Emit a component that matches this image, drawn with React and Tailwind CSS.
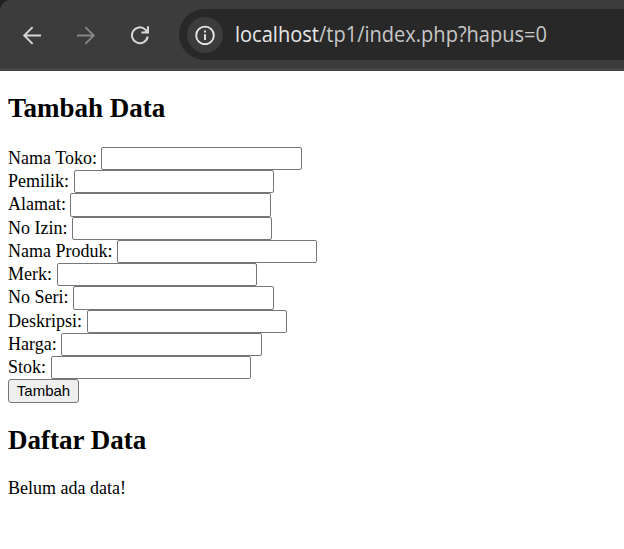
const fields = [
  { label: "Nama Toko:", labelClass: "w-[93px]", inputClass: "w-[201px] h-[23px]" },
  { label: "Pemilik:", labelClass: "w-[66px]", inputClass: "w-[200px] h-[23px]" },
  { label: "Alamat:", labelClass: "w-[62px]", inputClass: "w-[201px] h-[24px]" },
  { label: "No Izin:", labelClass: "w-[64px]", inputClass: "w-[200px] h-[23px]" },
  { label: "Nama Produk:", labelClass: "w-[109px]", inputClass: "w-[200px] h-[23px]" },
  { label: "Merk:", labelClass: "w-[49px]", inputClass: "w-[200px] h-[23px]" },
  { label: "No Seri:", labelClass: "w-[65px]", inputClass: "w-[201px] h-[24px]" },
  { label: "Deskripsi:", labelClass: "w-[79px]", inputClass: "w-[200px] h-[23px]" },
  { label: "Harga:", labelClass: "w-[53px]", inputClass: "w-[201px] h-[23px]" },
  { label: "Stok:", labelClass: "w-[43px]", inputClass: "w-[200px] h-[23px]" },
];

function Toolbar() {
  return (
    <header className="h-[71px] border-b border-[#3c3c3c] bg-[#202020]">
      <div className="flex h-[70px] items-start rounded-tl-[10px] border-b border-b-[#505050] bg-[#3c3c3c] pt-[9px]">
        <div className="flex h-[51px] w-[179px] shrink-0 items-center pl-[22px]">
          <svg className="h-5 w-5" viewBox="0 0 20 20" fill="none" stroke="#d6d6d6" strokeWidth="1.9">
            <path d="M19 10.5H2.3M10.6 2.1L2.2 10.5L10.6 18.9" />
          </svg>
          <svg className="ml-[34px] h-5 w-5" viewBox="0 0 20 20" fill="none" stroke="#858585" strokeWidth="1.9">
            <path d="M1 10.5H17.7M9.4 2.1L17.8 10.5L9.4 18.9" />
          </svg>
          <svg className="ml-[34px] h-5 w-5" viewBox="0 0 20 20" fill="none" stroke="#d6d6d6" strokeWidth="2">
            <path d="M17.7 11.5A7.9 7.9 0 1 1 15.4 4.6L17.6 6.8M18 1.2V7.4H11.4" />
            <path d="M18 3.5V7.4H13.8Z" fill="#d6d6d6" stroke="none" />
          </svg>
        </div>
        <div className="flex h-[51px] min-w-0 flex-1 items-center rounded-l-full bg-[#282828] pl-2">
          <div className="flex h-9 w-9 shrink-0 items-center justify-center rounded-full bg-[#3c3c3c]">
            <svg className="h-5 w-5" viewBox="0 0 20 20" fill="none" stroke="#e6e6e6" strokeWidth="1.9">
              <circle cx="10" cy="10.4" r="8.8" />
              <path d="M10 9.2V15M10 5.4V7.4" />
            </svg>
          </div>
          <svg className="ml-3 h-[51px] w-[320px] overflow-visible font-['Open_Sans','Noto_Sans',sans-serif] text-[21.5px]">
            <text x="0" y="33" textLength="312" lengthAdjust="spacingAndGlyphs" fill="#c7c7c7">
              <tspan fill="#e8e8e8">localhost</tspan>/tp1/index.php?hapus=0
            </text>
          </svg>
        </div>
      </div>
    </header>
  );
}

export default function App() {
  return (
    <div className="h-[549px] w-[624px] overflow-hidden bg-white font-['Liberation_Serif',serif] text-[18px] text-black">
      <Toolbar />
      <main className="pl-2">
        <h2 className="h-[76px] pt-[21px] text-[27px] leading-[32px] font-bold">Tambah Data</h2>
        <form>
          {fields.map((field) => (
            <label key={field.label} className="flex h-[23.22px]">
              <span className={"shrink-0 leading-[23px] whitespace-nowrap " + field.labelClass}>{field.label}</span>
              <input className={"rounded-[2px] border border-[#767676] bg-white " + field.inputClass} />
            </label>
          ))}
          <button
            type="button"
            className="block h-6 w-[71px] rounded-[3px] border border-[#767676] bg-[#efefef] text-center font-['Liberation_Sans',sans-serif] text-[15px] leading-[22px]"
          >
            Tambah
          </button>
        </form>
        <h2 className="mt-[21px] text-[27px] leading-[32px] font-bold">Daftar Data</h2>
        <p className="mt-[21px] leading-[23px]">Belum ada data!</p>
      </main>
    </div>
  );
}
